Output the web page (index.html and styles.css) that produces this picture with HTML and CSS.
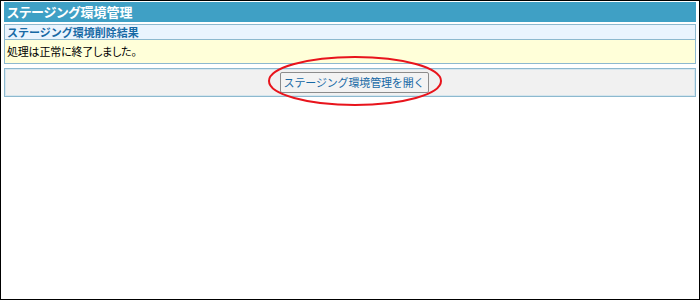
FILE: index.html
```html
<!DOCTYPE html>
<html lang='ja'>
<head>
    <meta charset='UTF-8'>
    <title>ステージング環境管理</title>
    <link rel="stylesheet" href="styles.css">
</head>
<body>
    <div class='frame'>
        <h1 class='page-title'>ステージング環境管理</h1>

        <div class='result-box'>
            <h2 class='result-title'>ステージング環境削除結果</h2>
            <p class='result-message'>処理は正常に終了しました。</p>
        </div>

        <div class='action-panel'>
            <div class='button-wrap'>
                <button class='open-button'>ステージング環境管理を開く</button>
                <!-- Highlight ring -->
                <svg class='highlight' width='180' height='54' viewBox='0 0 180 54'>
                    <ellipse cx='90' cy='27' rx='86' ry='24' fill='none' stroke='#e8141c' stroke-width='2'/>
                </svg>
            </div>
        </div>
    </div>
</body>
</html>
```

FILE: styles.css
```css
* {
    box-sizing: border-box;
    margin: 0;
    padding: 0;
}

body {
    background-color: #ffffff;
    font-family: 'Noto Sans CJK JP', sans-serif;
}

.frame {
    width: 700px;
    height: 300px;
    border: 1px solid #000000;
    padding: 1px 3px 0 3px;
}

.page-title {
    height: 20px;
    background-color: #3fa0c5;
    color: #ffffff;
    font-size: 13px;
    font-weight: bold;
    font-feature-settings: 'palt';
    line-height: 20px;
    padding-left: 3px;
    margin-bottom: 2px;
}

.result-box {
    border: 1px solid #8db9cf;
}

.result-title {
    height: 15px;
    background-color: #eaf4fe;
    border-bottom: 1px solid #8db9cf;
    color: #1769a5;
    font-size: 11px;
    font-weight: bold;
    line-height: 14px;
    padding-left: 2px;
}

.result-message {
    height: 23px;
    background-color: #ffffd9;
    font-size: 11px;
    font-feature-settings: 'palt';
    letter-spacing: -0.2px;
    line-height: 22px;
    padding-left: 2px;
    color: #000000;
}

.action-panel {
    margin-top: 4px;
    height: 29px;
    background-color: #f1f1f1;
    border: 1px solid #8db9cf;
    box-shadow: inset 0 0 0 1px #d6e6ee;
    display: flex;
    justify-content: center;
    align-items: center;
}

.button-wrap {
    position: relative;
    margin-left: 8px;
}

.open-button {
    display: block;
    width: 149px;
    height: 21px;
    padding: 0;
    background-color: #f3f3f3;
    border: 1px solid #8c8c8c;
    border-radius: 2px;
    color: #1769a5;
    font-family: inherit;
    font-size: 11px;
    letter-spacing: -0.15px;
    line-height: 19px;
}

.highlight {
    position: absolute;
    left: -15px;
    top: -18px;
}
```
